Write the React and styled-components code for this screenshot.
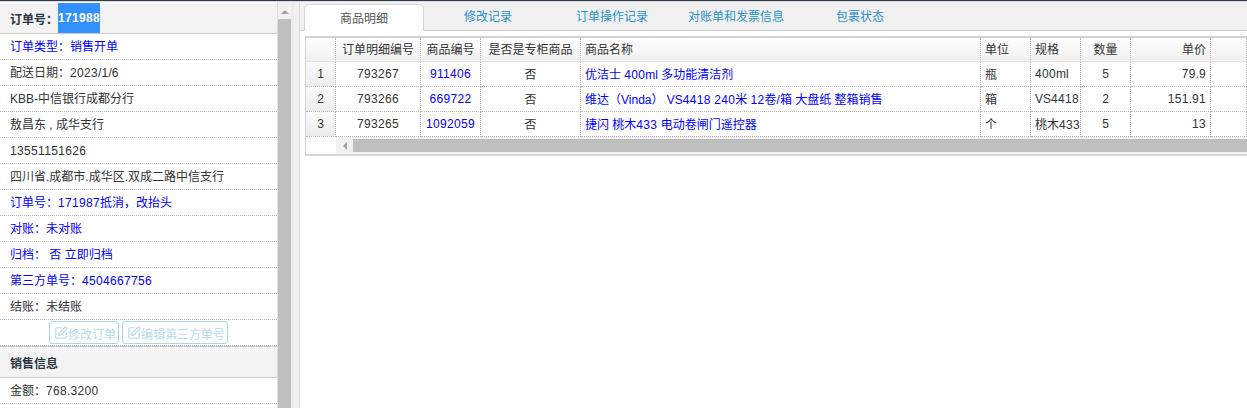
import React from "react";
import styled, { createGlobalStyle } from "styled-components";
import { SquarePen } from "lucide-react";

const GlobalStyle = createGlobalStyle`
  html, body {
    margin: 0;
    padding: 0;
    height: 408px;
    overflow: hidden;
    background: #fff;
  }
  body {
    font-family: "Liberation Sans", "Noto Sans CJK SC", sans-serif;
    font-size: 12px;
    color: #333;
  }
`;

const Page = styled.div`
  width: 1247px;
  height: 408px;
  display: flex;
  flex-direction: column;
  overflow: hidden;
`;

const TopLine = styled.div`
  height: 1px;
  flex: none;
  background: #2f3b4a;
  border-bottom: 1px solid #dcdcdc;
`;

const Body = styled.div`
  flex: 1;
  min-height: 0;
  display: flex;
`;

const SidePanel = styled.div`
  width: 277px;
  flex: none;
  padding-top: 1px;
  overflow: hidden;
  border-right: 1px solid #ddd;
`;

const PanelHeader = styled.div`
  height: 30px;
  display: flex;
  align-items: center;
  padding-left: 10px;
  background: #f3f3f3;
  border-bottom: 1px solid #ccc;
  font-weight: bold;
  color: #2a3340;
  ${(p) => p.$divided && "border-top: 1px solid #ccc;"}
`;

const Selected = styled.span`
  height: 30px;
  line-height: 30px;
  background: #3390ff;
  color: #fff;
`;

const Digits = styled.span`
  letter-spacing: 0.33px;
`;

const Row = styled.div`
  height: 25px;
  line-height: 27px;
  padding-left: 10px;
  border-bottom: 1px dotted #bbb;
  color: ${(p) => (p.$link ? "#0000ff" : "#333")};
  white-space: nowrap;
  overflow: hidden;
`;

const ActionRow = styled.div`
  height: 26px;
  display: flex;
  justify-content: center;
  gap: 3px;
  padding-top: 1px;
  box-sizing: border-box;
  border-bottom: 1px dotted #bbb;
`;

const GhostButton = styled.div`
  height: 23px;
  box-sizing: border-box;
  display: flex;
  align-items: center;
  padding: 1px 2px 0 4px;
  border: 1px solid #abd9e9;
  border-radius: 3px;
  color: #b4dcea;

  svg {
    margin-top: -1px;
  }
`;

const VScrollbar = styled.div`
  width: 13px;
  flex: none;
  background: #f1f1f1;
  display: flex;
  flex-direction: column;
`;

const VArrow = styled.div`
  height: 17px;
  flex: none;
  display: flex;
  justify-content: center;
  padding-top: 8px;
  box-sizing: border-box;
  &::before {
    content: "";
    height: 0;
    border-left: 4px solid transparent;
    border-right: 4px solid transparent;
    border-bottom: 4px solid #a3a3a3;
  }
`;

const VThumb = styled.div`
  flex: 1;
  background: #bfbfbf;
`;

const Gutter = styled.div`
  width: 9px;
  flex: none;
  background: #f1f1f1;
  border-left: 3px solid #ececec;
  border-right: 1px solid #dcdcdc;
  box-sizing: border-box;
`;

const Main = styled.div`
  flex: 1;
  min-width: 0;
`;

const TabBar = styled.div`
  height: 28px;
  display: flex;
  align-items: flex-end;
  gap: 4px;
  padding-left: 4px;
  background: #f1f1f1;
  border-bottom: 1px solid #ccc;
`;

const Tab = styled.div`
  width: 120px;
  flex: none;
  height: 27px;
  line-height: 29px;
  box-sizing: border-box;
  text-align: center;
  color: ${(p) => (p.$active ? "#555" : "#2a8fc4")};
  ${(p) =>
    p.$active &&
    `
    background: #fff;
    border: 1px solid #d5d5d5;
    border-bottom: none;
    border-radius: 5px 5px 0 0;
    margin-bottom: -1px;
  `}
`;

const GridWrap = styled.div`
  margin: 5px 0 0 5px;
  border-top: 2px solid #d2d2d2;
  border-left: 1px solid #d2d2d2;
  border-bottom: 2px solid #d8d8d8;
  overflow: hidden;
`;

const Grid = styled.table`
  border-collapse: separate;
  border-spacing: 0;
  table-layout: fixed;
  width: 941px;
`;

const HeadCell = styled.th`
  height: 24px;
  padding: 0 4px 3px 4px;
  box-sizing: border-box;
  font-weight: normal;
  color: #333;
  text-align: ${(p) => p.$align || "left"};
  background: linear-gradient(#ffffff, #f0f0f0);
  border-right: 1px dotted #bbb;
  border-bottom: 1px solid #e4e4e4;
  white-space: nowrap;
  overflow: hidden;
`;

const Cell = styled.td`
  height: 25px;
  padding: 0 4px 1px 4px;
  box-sizing: border-box;
  color: ${(p) => (p.$link ? "#0000ff" : "#333")};
  text-align: ${(p) => p.$align || "left"};
  border-right: 1px dotted #bbb;
  border-bottom: 1px dotted #bbb;
  white-space: nowrap;
  overflow: hidden;
`;

const NumCell = styled(Cell)`
  text-align: center;
  background: linear-gradient(#fafafa, #ececec);
`;

const HScrollRow = styled.div`
  height: 17px;
  display: flex;
`;

const HCorner = styled.div`
  width: 30px;
  flex: none;
`;

const HTrack = styled.div`
  flex: 1;
  display: flex;
  align-items: center;
  background: #f1f1f1;
`;

const HArrow = styled.div`
  width: 17px;
  flex: none;
  display: flex;
  justify-content: center;
  &::before {
    content: "";
    border-top: 4px solid transparent;
    border-bottom: 4px solid transparent;
    border-right: 4px solid #a3a3a3;
  }
`;

const HThumb = styled.div`
  flex: 1;
  height: 13px;
  background: #bfbfbf;
`;

// digits in the reference sit on a 7px advance, so runs of them get a bit of tracking
function Spaced({ children }) {
  return String(children)
    .split(/(\d+)/)
    .map((part, i) => (/^\d/.test(part) ? <Digits key={i}>{part}</Digits> : part));
}

// full-width punctuation, written as escapes so it can't get flattened to ASCII
const COLON = "\uFF1A";
const COMMA = "\uFF0C";
const LPAREN = "\uFF08";
const RPAREN = "\uFF09";

const orderRows = [
  { text: `订单类型${COLON}销售开单`, link: true },
  { text: `配送日期${COLON}2023/1/6` },
  { text: "KBB-中信银行成都分行" },
  { text: "敖昌东 , 成华支行" },
  { text: "13551151626" },
  { text: "四川省.成都市.成华区.双成二路中信支行" },
  { text: `订单号${COLON}171987抵消${COMMA}改抬头`, link: true },
  { text: `对账${COLON}未对账`, link: true },
  { text: `归档${COLON} 否 立即归档`, link: true },
  { text: `第三方单号${COLON}4504667756`, link: true },
  { text: `结账${COLON}未结账` },
];

const tabs = [
  { label: "商品明细", active: true },
  { label: "修改记录" },
  { label: "订单操作记录" },
  { label: "对账单和发票信息" },
  { label: "包裹状态" },
];

const columns = [
  { label: "", width: 30 },
  { label: "订单明细编号", width: 85, align: "center" },
  { label: "商品编号", width: 60, align: "center" },
  { label: "是否是专柜商品", width: 100, align: "center" },
  { label: "商品名称", width: 400 },
  { label: "单位", width: 50 },
  { label: "规格", width: 50 },
  { label: "数量", width: 50, align: "center" },
  { label: "单价", width: 80, align: "right" },
  { label: "", width: 36 },
];

const items = [
  ["793267", "911406", "否", "优洁士 400ml 多功能清洁剂", "瓶", "400ml", "5", "79.9"],
  ["793266", "669722", "否", `维达${LPAREN}Vinda${RPAREN} VS4418 240米 12卷/箱 大盘纸 整箱销售`, "箱", "VS4418", "2", "151.91"],
  ["793265", "1092059", "否", "捷闪 桃木433 电动卷闸门遥控器", "个", "桃木433", "5", "13"],
];

export default function App() {
  return (
    <Page>
      <GlobalStyle />
      <TopLine />
      <Body>
        <SidePanel>
          <PanelHeader>
            {`订单号${COLON}`}
            <Selected>
              <Spaced>171988</Spaced>
            </Selected>
          </PanelHeader>
          {orderRows.map((row) => (
            <Row key={row.text} $link={row.link}>
              <Spaced>{row.text}</Spaced>
            </Row>
          ))}
          <ActionRow>
            <GhostButton>
              <SquarePen size={14} />
              修改订单
            </GhostButton>
            <GhostButton>
              <SquarePen size={14} />
              编辑第三方单号
            </GhostButton>
          </ActionRow>
          <PanelHeader $divided>销售信息</PanelHeader>
          <Row>
            <Spaced>{`金额${COLON}768.3200`}</Spaced>
          </Row>
        </SidePanel>
        <VScrollbar>
          <VArrow />
          <VThumb />
        </VScrollbar>
        <Gutter />
        <Main>
          <TabBar>
            {tabs.map((tab) => (
              <Tab key={tab.label} $active={tab.active}>
                {tab.label}
              </Tab>
            ))}
          </TabBar>
          <GridWrap>
            <Grid>
              <colgroup>
                {columns.map((col, i) => (
                  <col key={i} style={{ width: col.width }} />
                ))}
              </colgroup>
              <thead>
                <tr>
                  {columns.map((col, i) => (
                    <HeadCell key={i} $align={col.align}>
                      {col.label}
                    </HeadCell>
                  ))}
                </tr>
              </thead>
              <tbody>
                {items.map((item, i) => (
                  <tr key={item[0]}>
                    <NumCell>{i + 1}</NumCell>
                    <Cell $align="center">
                      <Spaced>{item[0]}</Spaced>
                    </Cell>
                    <Cell $align="center" $link>
                      <Spaced>{item[1]}</Spaced>
                    </Cell>
                    <Cell $align="center">{item[2]}</Cell>
                    <Cell $link>
                      <Spaced>{item[3]}</Spaced>
                    </Cell>
                    <Cell>{item[4]}</Cell>
                    <Cell>
                      <Spaced>{item[5]}</Spaced>
                    </Cell>
                    <Cell $align="center">{item[6]}</Cell>
                    <Cell $align="right">
                      <Spaced>{item[7]}</Spaced>
                    </Cell>
                    <Cell />
                  </tr>
                ))}
              </tbody>
            </Grid>
            <HScrollRow>
              <HCorner />
              <HTrack>
                <HArrow />
                <HThumb />
              </HTrack>
            </HScrollRow>
          </GridWrap>
        </Main>
      </Body>
    </Page>
  );
}
